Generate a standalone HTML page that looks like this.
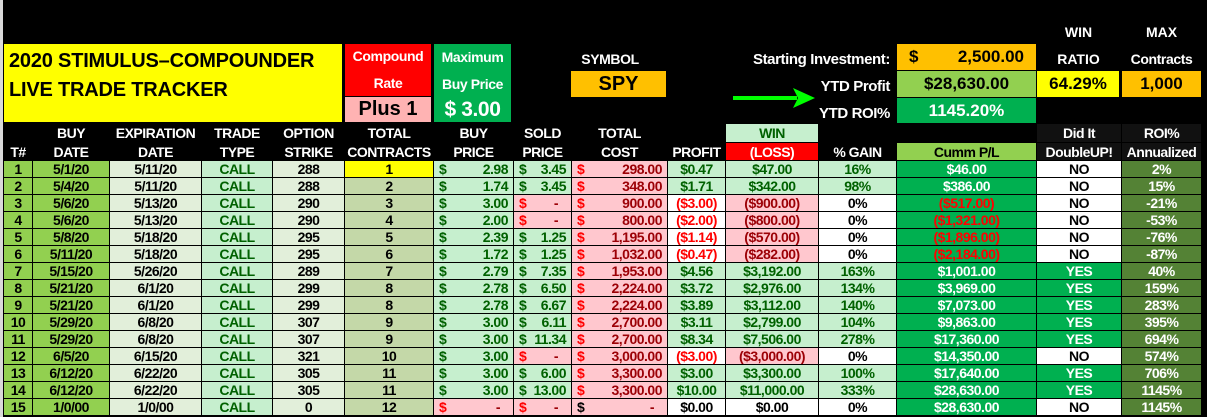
<!DOCTYPE html>
<html><head><meta charset="utf-8"><style>
*{margin:0;padding:0;box-sizing:border-box}
body{width:1207px;height:417px;background:#000;position:relative;overflow:hidden;font-family:"Liberation Sans",Arial,sans-serif;font-weight:bold;}
.a{position:absolute;display:flex;align-items:center;justify-content:center;white-space:nowrap}
.w{color:#fff}
table{position:absolute;left:3px;top:123px;border-collapse:collapse;table-layout:fixed;font-size:14px;letter-spacing:-0.5px}
td{border:1px solid #000;text-align:center;white-space:nowrap;height:17px;padding:0 2px;overflow:hidden}
tr.h td{color:#fff;background:#000;height:19px;font-size:14px}
tr.h2 td{height:18px}
.g1{background:#92d050;color:#000}
.ex{background:#e2efda;color:#000}
.tt{background:#c6efce;color:#006100}
.ct{background:#c4d8a8;color:#000}
.gp{background:#c6efce;color:#006100}
.pk{background:#ffc7ce;color:#9c0006}
.wh{background:#fff;color:#000}
.whr{background:#fff;color:#ff0000}
.cm{background:#00b050;color:#fff}
.cmr{background:#00b050;color:#ff0000}
.ys{background:#00b050;color:#fff}
.ro{background:#548235;color:#fff}
.d{display:flex;justify-content:space-between;padding:0 3px}
</style></head><body>
<div style="position:absolute;left:0;top:0;width:3px;height:417px;background:#d9d9d9"></div>

<div class="a" style="left:4px;top:44px;width:338px;height:78px;background:#ffff00;display:block;padding:3px 0 0 5px;font-size:20px;line-height:29px;color:#000;letter-spacing:-0.2px">2020 STIMULUS–COMPOUNDER<br>LIVE TRADE TRACKER</div>
<div class="a w" style="left:345px;top:44px;width:86px;height:52px;background:#ff0000;font-size:14px;letter-spacing:-0.4px;flex-direction:column;line-height:27px">Compound<span>Rate</span></div>
<div class="a" style="left:345px;top:97px;width:86px;height:25px;background:#ffb3b3;font-size:20px;color:#000">Plus 1</div>
<div class="a w" style="left:434px;top:44px;width:77px;height:78px;background:#00b050;font-size:14px;letter-spacing:-0.4px;flex-direction:column;line-height:27px">Maximum<span>Buy Price</span><span style="font-size:21px;line-height:24px">$ 3.00</span></div>

<div class="a w" style="left:560px;top:50px;width:100px;height:18px;font-size:14px;letter-spacing:-0.4px">SYMBOL</div>
<div class="a" style="left:571px;top:71px;width:95px;height:26px;background:#ffc000;font-size:20px;color:#000">SPY</div>

<div class="a w" style="left:700px;top:50px;width:190px;height:18px;font-size:15px;letter-spacing:-0.4px;justify-content:flex-end">Starting Investment:</div>
<div class="a w" style="left:700px;top:77px;width:190px;height:18px;font-size:15px;letter-spacing:-0.4px;justify-content:flex-end">YTD Profit</div>
<div class="a w" style="left:700px;top:104px;width:190px;height:18px;font-size:15px;letter-spacing:-0.4px;justify-content:flex-end">YTD ROI%</div>
<div class="a" style="left:897px;top:44px;width:139px;height:26px;background:#ffc000;font-size:17px;color:#000;justify-content:space-between;padding:0 12px">$<span>2,500.00</span></div>
<div class="a" style="left:897px;top:71px;width:139px;height:26px;background:#92d050;font-size:17px;color:#000">$28,630.00</div>
<div class="a w" style="left:897px;top:98px;width:139px;height:25px;background:#00b050;font-size:17px">1145.20%</div>

<div class="a w" style="left:1037px;top:23px;width:83px;height:18px;font-size:14px">WIN</div>
<div class="a w" style="left:1037px;top:50px;width:83px;height:18px;font-size:14px">RATIO</div>
<div class="a" style="left:1037px;top:71px;width:82px;height:26px;background:#ffff00;font-size:17px;color:#000">64.29%</div>
<div class="a w" style="left:1122px;top:23px;width:79px;height:18px;font-size:14px">MAX</div>
<div class="a w" style="left:1122px;top:50px;width:79px;height:18px;font-size:14px;letter-spacing:-0.4px">Contracts</div>
<div class="a" style="left:1122px;top:71px;width:79px;height:26px;background:#ffc000;font-size:17px;color:#000">1,000</div>

<svg style="position:absolute;left:730px;top:86px" width="90" height="24"><rect x="3" y="10" width="64" height="4" fill="#00ff00"/><polygon points="63,2 85,12 63,22 68,12" fill="#00ff00"/></svg>

<table>
<colgroup><col style="width:29px"><col style="width:77px"><col style="width:92px"><col style="width:71px"><col style="width:72px"><col style="width:89px"><col style="width:80px"><col style="width:58px"><col style="width:96px"><col style="width:58px"><col style="width:93px"><col style="width:78px"><col style="width:140px"><col style="width:85px"><col style="width:80px"></colgroup>
<tr class="h"><td></td><td>BUY</td><td>EXPIRATION</td><td>TRADE</td><td>OPTION</td><td>TOTAL</td><td>BUY</td><td>SOLD</td><td>TOTAL</td><td></td><td style="background:#c6efce;color:#006100">WIN</td><td></td><td></td><td style="background:#111">Did It</td><td style="background:#111">ROI%</td></tr>
<tr class="h h2"><td>T#</td><td>DATE</td><td>DATE</td><td>TYPE</td><td>STRIKE</td><td>CONTRACTS</td><td>PRICE</td><td>PRICE</td><td>COST</td><td>PROFIT</td><td style="background:#ff0000;color:#fff">(LOSS)</td><td>% GAIN</td><td style="background:#92d050;color:#000">Cumm P/L</td><td style="background:#111">DoubleUP!</td><td style="background:#111">Annualized</td></tr>
<tr><td class="g1">1</td><td class="g1">5/1/20</td><td class="ex">5/11/20</td><td class="tt">CALL</td><td class="ex">288</td><td style="background:#ffff00">1</td><td class="gp"><div class="d">$<span>2.98</span></div></td><td class="gp"><div class="d">$<span>3.45</span></div></td><td class="pk"><div class="d"><span style="color:#ff0000">$</span><span>298.00</span></div></td><td class="gp">$0.47</td><td class="gp">$47.00</td><td class="gp">16%</td><td class="cm">$46.00</td><td class="wh">NO</td><td class="ro">2%</td></tr>
<tr><td class="g1">2</td><td class="g1">5/4/20</td><td class="ex">5/11/20</td><td class="tt">CALL</td><td class="ex">288</td><td class="ct">2</td><td class="gp"><div class="d">$<span>1.74</span></div></td><td class="gp"><div class="d">$<span>3.45</span></div></td><td class="pk"><div class="d"><span style="color:#ff0000">$</span><span>348.00</span></div></td><td class="gp">$1.71</td><td class="gp">$342.00</td><td class="gp">98%</td><td class="cm">$386.00</td><td class="wh">NO</td><td class="ro">15%</td></tr>
<tr><td class="g1">3</td><td class="g1">5/6/20</td><td class="ex">5/13/20</td><td class="tt">CALL</td><td class="ex">290</td><td class="ct">3</td><td class="gp"><div class="d">$<span>3.00</span></div></td><td class="pk"><div class="d"><span style="color:#ff0000">$</span><span style="padding-right:8px">-</span></div></td><td class="pk"><div class="d"><span style="color:#ff0000">$</span><span>900.00</span></div></td><td class="whr">($3.00)</td><td class="pk">($900.00)</td><td class="wh">0%</td><td class="cmr">($517.00)</td><td class="wh">NO</td><td class="ro">-21%</td></tr>
<tr><td class="g1">4</td><td class="g1">5/6/20</td><td class="ex">5/13/20</td><td class="tt">CALL</td><td class="ex">290</td><td class="ct">4</td><td class="gp"><div class="d">$<span>2.00</span></div></td><td class="pk"><div class="d"><span style="color:#ff0000">$</span><span style="padding-right:8px">-</span></div></td><td class="pk"><div class="d"><span style="color:#ff0000">$</span><span>800.00</span></div></td><td class="whr">($2.00)</td><td class="pk">($800.00)</td><td class="wh">0%</td><td class="cmr">($1,321.00)</td><td class="wh">NO</td><td class="ro">-53%</td></tr>
<tr><td class="g1">5</td><td class="g1">5/8/20</td><td class="ex">5/18/20</td><td class="tt">CALL</td><td class="ex">295</td><td class="ct">5</td><td class="gp"><div class="d">$<span>2.39</span></div></td><td class="gp"><div class="d">$<span>1.25</span></div></td><td class="pk"><div class="d"><span style="color:#ff0000">$</span><span>1,195.00</span></div></td><td class="whr">($1.14)</td><td class="pk">($570.00)</td><td class="wh">0%</td><td class="cmr">($1,896.00)</td><td class="wh">NO</td><td class="ro">-76%</td></tr>
<tr><td class="g1">6</td><td class="g1">5/11/20</td><td class="ex">5/18/20</td><td class="tt">CALL</td><td class="ex">295</td><td class="ct">6</td><td class="gp"><div class="d">$<span>1.72</span></div></td><td class="gp"><div class="d">$<span>1.25</span></div></td><td class="pk"><div class="d"><span style="color:#ff0000">$</span><span>1,032.00</span></div></td><td class="whr">($0.47)</td><td class="pk">($282.00)</td><td class="wh">0%</td><td class="cmr">($2,184.00)</td><td class="wh">NO</td><td class="ro">-87%</td></tr>
<tr><td class="g1">7</td><td class="g1">5/15/20</td><td class="ex">5/26/20</td><td class="tt">CALL</td><td class="ex">289</td><td class="ct">7</td><td class="gp"><div class="d">$<span>2.79</span></div></td><td class="gp"><div class="d">$<span>7.35</span></div></td><td class="pk"><div class="d"><span style="color:#ff0000">$</span><span>1,953.00</span></div></td><td class="gp">$4.56</td><td class="gp">$3,192.00</td><td class="gp">163%</td><td class="cm">$1,001.00</td><td class="ys">YES</td><td class="ro">40%</td></tr>
<tr><td class="g1">8</td><td class="g1">5/21/20</td><td class="ex">6/1/20</td><td class="tt">CALL</td><td class="ex">299</td><td class="ct">8</td><td class="gp"><div class="d">$<span>2.78</span></div></td><td class="gp"><div class="d">$<span>6.50</span></div></td><td class="pk"><div class="d"><span style="color:#ff0000">$</span><span>2,224.00</span></div></td><td class="gp">$3.72</td><td class="gp">$2,976.00</td><td class="gp">134%</td><td class="cm">$3,969.00</td><td class="ys">YES</td><td class="ro">159%</td></tr>
<tr><td class="g1">9</td><td class="g1">5/21/20</td><td class="ex">6/1/20</td><td class="tt">CALL</td><td class="ex">299</td><td class="ct">8</td><td class="gp"><div class="d">$<span>2.78</span></div></td><td class="gp"><div class="d">$<span>6.67</span></div></td><td class="pk"><div class="d"><span style="color:#ff0000">$</span><span>2,224.00</span></div></td><td class="gp">$3.89</td><td class="gp">$3,112.00</td><td class="gp">140%</td><td class="cm">$7,073.00</td><td class="ys">YES</td><td class="ro">283%</td></tr>
<tr><td class="g1">10</td><td class="g1">5/29/20</td><td class="ex">6/8/20</td><td class="tt">CALL</td><td class="ex">307</td><td class="ct">9</td><td class="gp"><div class="d">$<span>3.00</span></div></td><td class="gp"><div class="d">$<span>6.11</span></div></td><td class="pk"><div class="d"><span style="color:#ff0000">$</span><span>2,700.00</span></div></td><td class="gp">$3.11</td><td class="gp">$2,799.00</td><td class="gp">104%</td><td class="cm">$9,863.00</td><td class="ys">YES</td><td class="ro">395%</td></tr>
<tr><td class="g1">11</td><td class="g1">5/29/20</td><td class="ex">6/8/20</td><td class="tt">CALL</td><td class="ex">307</td><td class="ct">9</td><td class="gp"><div class="d">$<span>3.00</span></div></td><td class="gp"><div class="d">$<span>11.34</span></div></td><td class="pk"><div class="d"><span style="color:#ff0000">$</span><span>2,700.00</span></div></td><td class="gp">$8.34</td><td class="gp">$7,506.00</td><td class="gp">278%</td><td class="cm">$17,360.00</td><td class="ys">YES</td><td class="ro">694%</td></tr>
<tr><td class="g1">12</td><td class="g1">6/5/20</td><td class="ex">6/15/20</td><td class="tt">CALL</td><td class="ex">321</td><td class="ct">10</td><td class="gp"><div class="d">$<span>3.00</span></div></td><td class="pk"><div class="d"><span style="color:#ff0000">$</span><span style="padding-right:8px">-</span></div></td><td class="pk"><div class="d"><span style="color:#ff0000">$</span><span>3,000.00</span></div></td><td class="whr">($3.00)</td><td class="pk">($3,000.00)</td><td class="wh">0%</td><td class="cm">$14,350.00</td><td class="wh">NO</td><td class="ro">574%</td></tr>
<tr><td class="g1">13</td><td class="g1">6/12/20</td><td class="ex">6/22/20</td><td class="tt">CALL</td><td class="ex">305</td><td class="ct">11</td><td class="gp"><div class="d">$<span>3.00</span></div></td><td class="gp"><div class="d">$<span>6.00</span></div></td><td class="pk"><div class="d"><span style="color:#ff0000">$</span><span>3,300.00</span></div></td><td class="gp">$3.00</td><td class="gp">$3,300.00</td><td class="gp">100%</td><td class="cm">$17,640.00</td><td class="ys">YES</td><td class="ro">706%</td></tr>
<tr><td class="g1">14</td><td class="g1">6/12/20</td><td class="ex">6/22/20</td><td class="tt">CALL</td><td class="ex">305</td><td class="ct">11</td><td class="gp"><div class="d">$<span>3.00</span></div></td><td class="gp"><div class="d">$<span>13.00</span></div></td><td class="pk"><div class="d"><span style="color:#ff0000">$</span><span>3,300.00</span></div></td><td class="gp">$10.00</td><td class="gp">$11,000.00</td><td class="gp">333%</td><td class="cm">$28,630.00</td><td class="ys">YES</td><td class="ro">1145%</td></tr>
<tr><td class="g1">15</td><td class="g1">1/0/00</td><td class="ex">1/0/00</td><td class="tt">CALL</td><td class="ex">0</td><td class="ct">12</td><td class="pk"><div class="d"><span style="color:#ff0000">$</span><span style="padding-right:8px">-</span></div></td><td class="pk"><div class="d"><span style="color:#ff0000">$</span><span style="padding-right:8px">-</span></div></td><td class="pk"><div class="d"><span style="color:#000">$</span><span style="padding-right:8px">-</span></div></td><td class="wh">$0.00</td><td class="wh">$0.00</td><td class="wh">0%</td><td class="cm">$28,630.00</td><td class="wh">NO</td><td class="ro">1145%</td></tr>
</table>
</body></html>
